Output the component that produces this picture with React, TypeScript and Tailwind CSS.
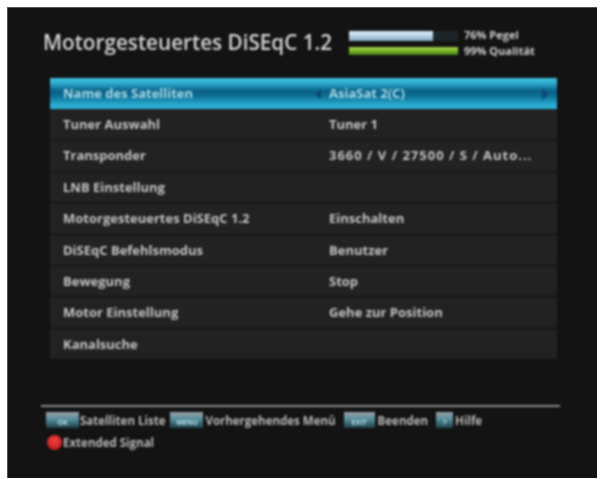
const rows = [
  { label: "Name des Satelliten", value: "AsiaSat 2(C)" },
  { label: "Tuner Auswahl", value: "Tuner 1" },
  { label: "Transponder", value: "3660 / V / 27500 / S / Auto..." },
  { label: "LNB Einstellung", value: "" },
  { label: "Motorgesteuertes DiSEqC 1.2", value: "Einschalten" },
  { label: "DiSEqC Befehlsmodus", value: "Benutzer" },
  { label: "Bewegung", value: "Stop" },
  { label: "Motor Einstellung", value: "Gehe zur Position" },
  { label: "Kanalsuche", value: "" },
];

function KeyBadge({ label, className }: { label: string; className: string }) {
  return (
    <span
      className={`flex h-[16px] shrink-0 items-end justify-center bg-gradient-to-b from-[#9aa3a5] via-[#4f8a99] to-[#1f3f49] text-[7px] leading-[11px] font-bold text-[#b5dbe4] ${className}`}
    >
      {label}
    </span>
  );
}

function Row({ label, value, active }: { label: string; value: string; active: boolean }) {
  if (active) {
    return (
      <div className="flex h-[31px] items-center bg-[linear-gradient(to_bottom,#3fc4e0_0%,#2fb0d2_15%,#0b5f86_42%,#0d6d94_58%,#27a9cd_85%,#2bb4d6_100%)] pl-[13px] text-[#a9dcea]">
        <span className="w-[251px] shrink-0">{label}</span>
        <span className="ml-[1px] h-0 w-0 shrink-0 border-y-[5px] border-r-[6px] border-y-transparent border-r-[#0a4a6c]" />
        <span className="ml-[8px]">{value}</span>
        <span className="mr-[8px] ml-auto h-0 w-0 border-y-[6px] border-l-[7px] border-y-transparent border-l-[#0d4a78]" />
      </div>
    );
  }
  return (
    <div className="flex h-[31.4px] items-center border-b border-[#0e0e0e] pt-[1px] pl-[13px] text-[#c4c4c4]">
      <span className="w-[266px] shrink-0">{label}</span>
      <span className={value.startsWith("3660") ? "tracking-[1px]" : ""}>{value}</span>
    </div>
  );
}

export default function App() {
  return (
    <div className="h-[479px] w-[601px] bg-white pt-[7px] pr-[4px] pl-[7px] font-['Open_Sans',sans-serif]">
      <div className="h-[471px] border-t border-l border-[#555] bg-[#131313] pt-[15px]">
        <div className="blur-[1px]">
          <header className="flex h-[40px] items-center pl-[35px]">
            <h1 className="w-[306px] shrink-0 text-[20.7px] font-semibold whitespace-nowrap text-[#d4d4d4]">
              Motorgesteuertes DiSEqC 1.2
            </h1>
            <div className="flex w-[109px] shrink-0 flex-col gap-[6px]">
              <div className="h-[10px] bg-[#1d2529]">
                <div className="h-full w-[77%] bg-gradient-to-b from-[#e6f1f7] via-[#b4d2e6] to-[#7fa6c2]" />
              </div>
              <div className="h-[8px] bg-gradient-to-b from-[#a6d24a] via-[#7ab52a] to-[#3f7a12]" />
            </div>
            <div className="ml-[6px] flex flex-col gap-[2px] text-[11px] leading-[14px] font-bold whitespace-nowrap text-[#cfcfcf]">
              <span>76% Pegel</span>
              <span>99% Qualität</span>
            </div>
          </header>

          <section className="mt-[15px] ml-[42px] w-[507px] bg-[#222222] text-[13px] font-bold">
            {rows.map((row, i) => (
              <Row key={row.label} label={row.label} value={row.value} active={i === 0} />
            ))}
          </section>

          <footer className="mt-[45px] ml-[33px] w-[519px] border-t-2 border-[#8c8c8c] pt-[5px] pl-[5px] text-[11.5px] font-bold whitespace-nowrap text-[#b9b9b9]">
            <div className="flex h-[16px] items-center">
              <KeyBadge label="OK" className="w-[33px]" />
              <span className="ml-[1px]">Satelliten Liste</span>
              <KeyBadge label="MENU" className="ml-[5px] w-[33px]" />
              <span className="ml-[2px]">Vorhergehendes Menü</span>
              <KeyBadge label="EXIT" className="ml-[8px] w-[31px]" />
              <span className="ml-[3px]">Beenden</span>
              <KeyBadge label="?" className="ml-[8px] w-[17px]" />
              <span className="ml-[2px]">Hilfe</span>
            </div>
            <div className="mt-[6px] flex h-[16px] items-center">
              <span className="ml-[1px] h-[15px] w-[15px] shrink-0 rounded-full bg-[radial-gradient(circle_at_50%_35%,#f0413c,#b51414)]" />
              <span className="ml-[1px]">Extended Signal</span>
            </div>
          </footer>
        </div>
      </div>
    </div>
  );
}
